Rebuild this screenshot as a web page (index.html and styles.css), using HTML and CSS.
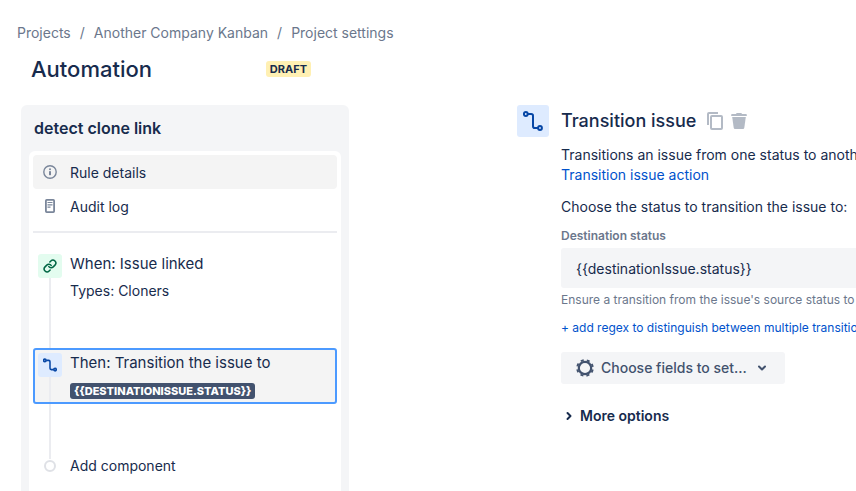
FILE: index.html
```html
<!DOCTYPE html>
<html lang="en">
<head>
    <meta charset="UTF-8" />
    <meta name="viewport" content="width=device-width, initial-scale=1.0" />
    <title>Automation - Project settings</title>
    <link rel="stylesheet" href="styles.css">
</head>
<body>
    <nav class="breadcrumbs" aria-label="Breadcrumbs">
        <a href="#">Projects</a>
        <span>/</span>
        <a href="#">Another Company Kanban</a>
        <span>/</span>
        <a href="#">Project settings</a>
    </nav>

    <header class="page-header">
        <h1>Automation</h1>
        <span class="badge">DRAFT</span>
    </header>

    <div class="layout">
        <aside class="sidebar">
            <h2>detect clone link</h2>
            <div class="rule-panel">
                <a href="#" class="menu-item menu-item-active">
                    <svg class="menu-icon" viewBox="0 0 16 16">
                        <circle cx="8" cy="8" r="6.2" fill="none" stroke="currentColor" stroke-width="1.4" />
                        <circle cx="8" cy="5.3" r="1" fill="currentColor" />
                        <rect x="7" y="7" width="2" height="4.2" rx="0.4" fill="currentColor" />
                    </svg>
                    Rule details
                </a>
                <a href="#" class="menu-item">
                    <svg class="menu-icon" viewBox="0 0 16 16">
                        <rect x="3.9" y="1.9" width="8.2" height="12.2" rx="0.8" fill="none" stroke="currentColor" stroke-width="1.8" />
                        <path d="M5.5 4.5h5M5.5 6.8h5M5.5 9.1h3" fill="none" stroke="currentColor" stroke-width="1.2" />
                    </svg>
                    Audit log
                </a>
                <hr class="divider">

                <div class="component">
                    <div class="rail">
                        <span class="component-icon icon-trigger">
                            <svg width="14" height="14" viewBox="0 0 24 24" fill="none" stroke="currentColor" stroke-width="2.6" stroke-linecap="round">
                                <path d="M10 13a5 5 0 0 0 7.54.54l3-3a5 5 0 0 0-7.07-7.07l-1.72 1.71" />
                                <path d="M14 11a5 5 0 0 0-7.54-.54l-3 3a5 5 0 0 0 7.07 7.07l1.71-1.71" />
                            </svg>
                        </span>
                        <span class="line"></span>
                    </div>
                    <div>
                        <h3>When: Issue linked</h3>
                        <p>Types: Cloners</p>
                    </div>
                </div>
                <div class="connector connector-short"></div>

                <div class="component component-selected">
                    <div class="rail">
                        <span class="component-icon icon-action">
                            <svg width="14" height="14" viewBox="0 0 20 20" fill="none" stroke="currentColor" stroke-width="2.2" stroke-linejoin="round">
                                <circle cx="2.6" cy="3.4" r="1.8" />
                                <circle cx="17.2" cy="16.6" r="1.8" />
                                <path d="M4.6 3.4H8.2Q10 3.4 10 5.2V14.8Q10 16.6 11.8 16.6H15.2" />
                            </svg>
                        </span>
                        <span class="line"></span>
                    </div>
                    <div>
                        <h3>Then: Transition the issue to</h3>
                        <span class="lozenge">{{DESTINATIONISSUE.STATUS}}</span>
                    </div>
                </div>
                <div class="connector"></div>

                <button type="button" class="add-component">
                    <span class="node"></span>
                    Add component
                </button>
            </div>
        </aside>

        <main class="detail">
            <span class="detail-icon icon-action">
                <svg width="20" height="20" viewBox="0 0 20 20" fill="none" stroke="currentColor" stroke-width="2" stroke-linejoin="round">
                    <circle cx="2.8" cy="3" r="1.9" />
                    <circle cx="17" cy="17" r="1.9" />
                    <path d="M4.8 3H8.2Q10 3 10 4.8V15.2Q10 17 11.8 17H15" />
                </svg>
            </span>
            <div class="detail-body">
                <div class="detail-title">
                    <h2>Transition issue</h2>
                    <button type="button" class="icon-button" aria-label="Duplicate">
                        <svg width="16" height="18" viewBox="0 0 16 18" fill="none" stroke="currentColor" stroke-width="2">
                            <path d="M1 13V2Q1 1 2 1H11" />
                            <rect x="4" y="4" width="11" height="13" rx="1" />
                        </svg>
                    </button>
                    <button type="button" class="icon-button" aria-label="Delete">
                        <svg width="16" height="18" viewBox="0 0 16 18" fill="currentColor">
                            <path d="M1 2h4q.3-1 1-1h4q.7 0 1 1h4q.8 0 .8.8V4H.2V2.8Q.2 2 1 2z" />
                            <path d="M1.2 5h13.6l-1.5 10.8Q13.1 17 12 17H4Q2.9 17 2.7 15.8z" />
                        </svg>
                    </button>
                </div>
                <p class="description">Transitions an issue from one status to another.<br>
                    <a href="#">Transition issue action</a></p>
                <p class="prompt">Choose the status to transition the issue to:</p>

                <label for="destination">Destination status</label>
                <input type="text" id="destination" class="text-field" value="{{destinationIssue.status}}">
                <p class="hint">Ensure a transition from the issue's source status to</p>
                <a href="#" class="regex-link">+ add regex to distinguish between multiple transitions</a>

                <button type="button" class="fields-button">
                    <svg width="18" height="18" viewBox="0 0 18 18" fill="none" stroke="currentColor">
                        <circle cx="9" cy="9" r="6.2" stroke-width="2.2" />
                        <circle cx="9" cy="9" r="7.9" stroke-width="1.8" stroke-dasharray="3.1 3.105" stroke-dashoffset="-1.55" />
                    </svg>
                    Choose fields to set...
                    <svg class="chevron" width="10" height="10" viewBox="0 0 10 10" fill="none" stroke="currentColor" stroke-width="2" stroke-linecap="round" stroke-linejoin="round">
                        <path d="M2 3.5L5 6.5L8 3.5" />
                    </svg>
                </button>

                <button type="button" class="more-options">
                    <svg width="10" height="10" viewBox="0 0 10 10" fill="none" stroke="currentColor" stroke-width="2" stroke-linecap="round" stroke-linejoin="round">
                        <path d="M3.5 2L6.5 5L3.5 8" />
                    </svg>
                    More options
                </button>
            </div>
        </main>
    </div>
</body>
</html>
```

FILE: styles.css
```css
* {
    box-sizing: border-box;
}

body {
    margin: 0;
    padding: 23px 0 0;
    background: #fff;
    color: #172b4d;
    font-family: Inter, "Liberation Sans", sans-serif;
    font-size: 14px;
    line-height: 20px;
    overflow: hidden;
}

h1,
h2,
h3,
p {
    margin: 0;
    font-weight: 400;
}

a {
    color: #0052cc;
    text-decoration: none;
}

button {
    border: none;
    padding: 0;
    background: none;
    color: inherit;
    font: inherit;
    cursor: pointer;
}

.breadcrumbs {
    display: flex;
    gap: 9px;
    padding-left: 17px;
    color: #6b778c;
}

.breadcrumbs a {
    color: inherit;
}

.page-header {
    display: flex;
    align-items: center;
    justify-content: space-between;
    width: 280px;
    margin: 11px 0 21px 31px;
}

.page-header h1 {
    font-size: 22px;
    font-weight: 500;
    line-height: 30px;
}

.badge {
    padding: 0 4px;
    border-radius: 3px;
    background: #fff0b3;
    font-size: 11px;
    font-weight: 700;
    line-height: 16px;
}

.layout {
    display: flex;
    align-items: flex-start;
    gap: 168px;
    padding-left: 21px;
}

/* Rule sidebar */
.sidebar {
    flex: 0 0 328px;
    padding: 11px 8px 8px;
    border-radius: 6px;
    background: #f4f5f7;
}

.sidebar h2 {
    padding-left: 5px;
    font-size: 16px;
    font-weight: 600;
    line-height: 24px;
}

.rule-panel {
    margin-top: 11px;
    padding: 4px 4px 32px;
    border-radius: 6px;
    background: #fff;
}

.menu-item {
    display: flex;
    align-items: center;
    gap: 12px;
    height: 34px;
    padding: 2px 9px 0;
    border-radius: 4px;
    color: #172b4d;
}

.menu-item-active {
    background: #f4f4f4;
}

.menu-icon {
    width: 16px;
    height: 16px;
    margin-bottom: 2px;
    color: #7a869a;
}

.divider {
    height: 2px;
    margin: 8px 0 16px;
    border: none;
    background: #ebecf0;
}

.component {
    display: flex;
    gap: 8px;
    height: 56px;
    padding: 0 3px;
    border: 2px solid transparent;
    border-radius: 3px;
}

.component h3 {
    margin: 1px 0 5px;
    font-size: 15px;
    line-height: 24px;
}

.component-selected {
    border-color: #4c9aff;
    background: #f4f4f4;
}

.rail {
    display: flex;
    flex-direction: column;
    align-items: center;
    padding-top: 3px;
}

.component-icon {
    display: grid;
    place-items: center;
    width: 24px;
    height: 24px;
    border-radius: 3px;
}

.icon-trigger {
    background: #e3fcef;
    color: #006644;
}

.icon-action {
    background: #deebff;
    color: #0747a6;
}

.line {
    flex: 1;
    width: 2px;
    background: #ebecf0;
}

.connector {
    width: 2px;
    height: 55px;
    margin-left: 16px;
    background: #ebecf0;
}

.connector-short {
    height: 45px;
    margin-top: -2px;
}

.lozenge {
    display: block;
    width: max-content;
    margin-top: 8px;
    padding: 0 4px;
    border-radius: 3px;
    background: #42526e;
    color: #fff;
    font-size: 11px;
    font-weight: 800;
    line-height: 16px;
}

.add-component {
    display: flex;
    align-items: center;
    gap: 14px;
    padding-left: 11px;
    line-height: 14px;
}

.node {
    width: 12px;
    height: 12px;
    border: 2px solid #dfe1e6;
    border-radius: 50%;
}

/* Action detail */
.detail {
    display: flex;
    flex: 1;
    align-items: flex-start;
    gap: 12px;
    min-width: 0;
    white-space: nowrap;
}

.detail-icon {
    display: grid;
    flex: none;
    place-items: center;
    width: 32px;
    height: 32px;
    border-radius: 3px;
}

.detail-body {
    flex: 1;
    min-width: 0;
}

.detail-title {
    display: flex;
    align-items: center;
    gap: 8px;
    height: 32px;
    margin-bottom: 8px;
}

.detail-title h2 {
    margin-right: 3px;
    font-size: 18px;
    font-weight: 500;
}

.icon-button {
    display: flex;
    color: #b3bac5;
}

.prompt {
    margin-top: 12px;
}

label {
    display: block;
    margin: 11px 0 4px;
    color: #6b778c;
    font-size: 12px;
    font-weight: 600;
    line-height: 16px;
}

.text-field {
    display: block;
    width: 100%;
    height: 40px;
    padding: 0 15px;
    border: none;
    border-radius: 3px 0 0 3px;
    background: #f4f5f7;
    color: #172b4d;
    font: inherit;
}

.hint {
    margin: 4px 0 12px;
    color: #6b778c;
    font-size: 12px;
    line-height: 16px;
}

.regex-link {
    display: block;
    font-size: 12px;
    line-height: 16px;
}

.fields-button {
    display: flex;
    align-items: center;
    gap: 7px;
    height: 32px;
    margin: 16px 0 20px;
    padding: 0 18px 0 15px;
    border-radius: 3px;
    background: #f4f5f7;
    color: #42526e;
    font-weight: 500;
}

.fields-button .chevron {
    margin-left: 3px;
}

.more-options {
    display: flex;
    align-items: center;
    gap: 6px;
    height: 24px;
    padding-left: 3px;
    font-weight: 600;
}
```
